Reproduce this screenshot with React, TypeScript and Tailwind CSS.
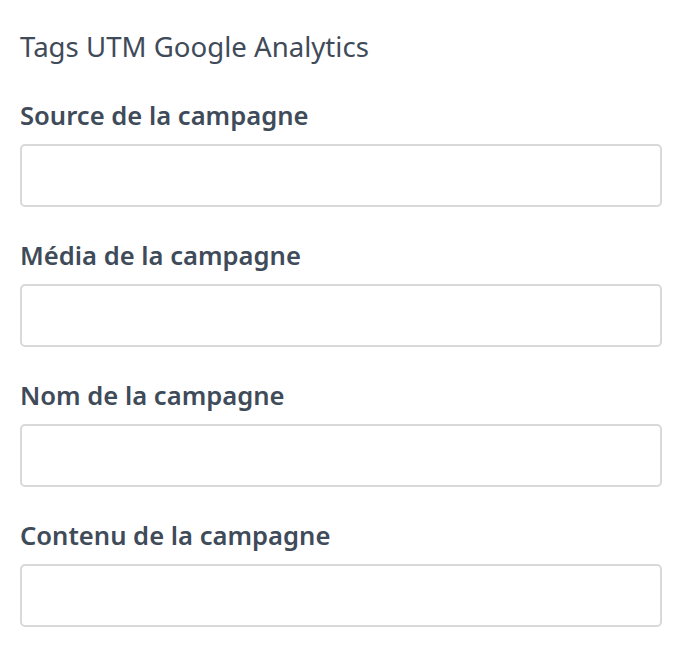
const fields = [
  "Source de la campagne",
  "Média de la campagne",
  "Nom de la campagne",
  "Contenu de la campagne",
];

export default function App() {
  return (
    <div className="min-h-screen bg-white px-5 pt-[28px] font-['Noto_Sans',sans-serif] text-[#404b5a]">
      <h2 className="text-[27.6px] leading-[36px]">Tags UTM Google Analytics</h2>
      <div className="mt-[34px] flex flex-col gap-[31px]">
        {fields.map((label) => (
          <div key={label} className="flex flex-col">
            <label className="text-[25.6px] font-semibold leading-[36px]">{label}</label>
            <input
              type="text"
              className="mt-[10px] h-[63px] w-[642px] rounded-[5px] border-2 border-[#d9d9d9] bg-white px-3 outline-none"
            />
          </div>
        ))}
      </div>
    </div>
  );
}
